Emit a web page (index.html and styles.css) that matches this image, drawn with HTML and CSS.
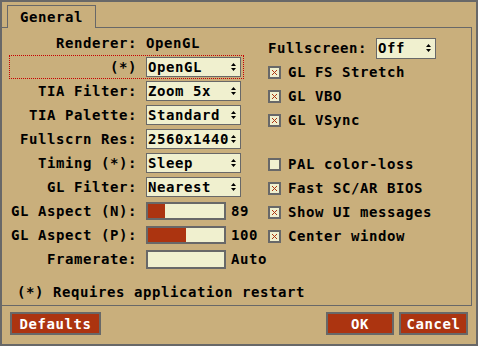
FILE: index.html
```html
<!DOCTYPE html>
<html lang="en">
<head>
  <meta charset="UTF-8">
  <title>Video Settings</title>
  <link rel="stylesheet" href="styles.css">
</head>
<body>
<div class="window">
  <div class="tabs"><div class="tab">General</div></div>

  <div class="panel">
    <div class="columns">
      <!-- Left column: labelled popups and sliders -->
      <div class="col-left">
        <div class="row"><span class="label">Renderer:</span><span class="value">OpenGL</span></div>
        <div class="row focus"><span class="label">(*)</span><div class="select"><span>OpenGL</span><svg class="arrows" width="5" height="8" viewBox="0 0 5 8"><path d="M2.5 0L5 3H0z M0 5h5L2.5 8z"/></svg></div></div>
        <div class="row"><span class="label">TIA Filter:</span><div class="select"><span>Zoom 5x</span><svg class="arrows" width="5" height="8" viewBox="0 0 5 8"><path d="M2.5 0L5 3H0z M0 5h5L2.5 8z"/></svg></div></div>
        <div class="row"><span class="label">TIA Palette:</span><div class="select"><span>Standard</span><svg class="arrows" width="5" height="8" viewBox="0 0 5 8"><path d="M2.5 0L5 3H0z M0 5h5L2.5 8z"/></svg></div></div>
        <div class="row"><span class="label">Fullscrn Res:</span><div class="select"><span>2560x1440</span><svg class="arrows" width="5" height="8" viewBox="0 0 5 8"><path d="M2.5 0L5 3H0z M0 5h5L2.5 8z"/></svg></div></div>
        <div class="row"><span class="label">Timing (*):</span><div class="select"><span>Sleep</span><svg class="arrows" width="5" height="8" viewBox="0 0 5 8"><path d="M2.5 0L5 3H0z M0 5h5L2.5 8z"/></svg></div></div>
        <div class="row"><span class="label">GL Filter:</span><div class="select"><span>Nearest</span><svg class="arrows" width="5" height="8" viewBox="0 0 5 8"><path d="M2.5 0L5 3H0z M0 5h5L2.5 8z"/></svg></div></div>
        <div class="row"><span class="label">GL Aspect (N):</span><div class="slider"><div class="slider-fill" style="width: 22.5%"></div></div><span class="slider-value">89</span></div>
        <div class="row"><span class="label">GL Aspect (P):</span><div class="slider"><div class="slider-fill" style="width: 50%"></div></div><span class="slider-value">100</span></div>
        <div class="row"><span class="label">Framerate:</span><div class="textbox"></div><span class="slider-value">Auto</span></div>
      </div>

      <!-- Right column: fullscreen popup and checkboxes -->
      <div class="col-right">
        <div class="row"><span class="label-inline">Fullscreen:</span><div class="select select-small"><span>Off</span><svg class="arrows" width="5" height="8" viewBox="0 0 5 8"><path d="M2.5 0L5 3H0z M0 5h5L2.5 8z"/></svg></div></div>
        <div class="row"><span class="check on"><svg width="9" height="9" viewBox="0 0 9 9"><path d="M2 2l5 5M7 2l-5 5"/></svg></span>GL FS Stretch</div>
        <div class="row"><span class="check on"><svg width="9" height="9" viewBox="0 0 9 9"><path d="M2 2l5 5M7 2l-5 5"/></svg></span>GL VBO</div>
        <div class="row"><span class="check on"><svg width="9" height="9" viewBox="0 0 9 9"><path d="M2 2l5 5M7 2l-5 5"/></svg></span>GL VSync</div>
        <div class="spacer"></div>
        <div class="row"><span class="check"></span>PAL color-loss</div>
        <div class="row"><span class="check on"><svg width="9" height="9" viewBox="0 0 9 9"><path d="M2 2l5 5M7 2l-5 5"/></svg></span>Fast SC/AR BIOS</div>
        <div class="row"><span class="check on"><svg width="9" height="9" viewBox="0 0 9 9"><path d="M2 2l5 5M7 2l-5 5"/></svg></span>Show UI messages</div>
        <div class="row"><span class="check on"><svg width="9" height="9" viewBox="0 0 9 9"><path d="M2 2l5 5M7 2l-5 5"/></svg></span>Center window</div>
      </div>
    </div>

    <div class="note">(*) Requires application restart</div>
  </div>

  <div class="buttons">
    <div class="btn btn-defaults">Defaults</div>
    <div class="btn-group">
      <div class="btn btn-ok">OK</div>
      <div class="btn btn-cancel">Cancel</div>
    </div>
  </div>
</div>
</body>
</html>
```

FILE: styles.css
```css
*, *::before, *::after { box-sizing: border-box; }
body { margin: 0; background: #c9af7c; font-family: "DejaVu Sans Mono", monospace; font-size: 14px; font-weight: bold; letter-spacing: 0.57px; color: #000; }

.window { width: 478px; height: 346px; border: 2px solid #686868; background: #c9af7c; display: flex; flex-direction: column; }

/* Tab strip */
.tabs { height: 25px; padding-left: 5px; display: flex; }
.tab { position: relative; z-index: 1; margin-top: 3px; margin-bottom: -1px; width: 89px; height: 23px; border: 1px solid #686868; border-bottom: none; background: #c9af7c; display: flex; align-items: center; justify-content: center; padding-bottom: 1px; }

.panel { height: 279px; margin-right: 4px; border: 1px solid #686868; border-left: none; display: flex; flex-direction: column; padding: 3px 0 1px 7px; }
.columns { display: flex; gap: 24px; }

/* Left column */
.col-left { width: 235px; flex-shrink: 0; display: flex; flex-direction: column; }
.row { height: 24px; display: flex; align-items: center; white-space: pre; }
.row > * { flex-shrink: 0; }
.col-left .row { border: 1px dotted transparent; }
.col-left .row.focus { border-color: #c80000; }
.label { width: 127px; text-align: right; margin-right: 9px; }

.select { width: 95px; height: 20px; background: #f0f0cf; border: 1px solid #686868; display: flex; align-items: center; justify-content: space-between; padding: 0 4px 0 1px; }
.select-small { width: 60px; height: 21px; }
.arrows { fill: #000; flex-shrink: 0; }

.slider { width: 80px; height: 18px; background: #f0f0cf; border: 2px solid #686868; }
.slider-fill { height: 100%; background: #ac3410; }
.slider-value { margin-left: 5px; }
.textbox { width: 80px; height: 19px; background: #f0f0cf; border: 2px solid #686868; }

/* Right column */
.col-right { margin-top: 5px; display: flex; flex-direction: column; }
.label-inline { margin-right: 9px; }
.spacer { height: 20px; }
.check { width: 13px; height: 13px; border: 2px solid #686868; background: #f0f0cf; margin-right: 7px; display: flex; }
.check svg { stroke: #ac3410; stroke-width: 1; fill: none; }

.note { margin-top: auto; height: 24px; line-height: 24px; padding-left: 8px; }

/* Bottom buttons */
.buttons { display: flex; justify-content: space-between; padding: 6px 8px 0 8px; }
.btn-group { display: flex; gap: 5px; }
.btn { height: 23px; background: #ac3410; border: 2px solid #686868; color: #fff; display: flex; align-items: center; justify-content: center; }
.btn-defaults { width: 91px; }
.btn-ok { width: 68px; }
.btn-cancel { width: 69px; }
```
